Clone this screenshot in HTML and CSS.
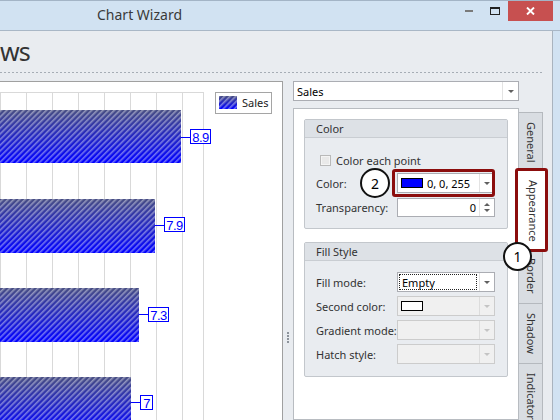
FILE: index.html
```html
<!DOCTYPE html>
<html>
<head>
<meta charset="utf-8">
<title>Chart Wizard</title>
<link rel="stylesheet" href="styles.css">
</head>
<body>
<div class="window">
  <div class="titlebar">
    <span class="title">Chart Wizard</span>
    <span class="spacer"></span>
    <span class="ctl"><svg width="8" height="2" viewBox="0 0 8 2"><rect width="8" height="2" fill="#7a7a7a"/></svg></span>
    <span class="ctl"><svg width="10" height="8" viewBox="0 0 10 8"><rect x="0.5" y="0.5" width="9" height="7" fill="none" stroke="#222"/><rect x="0" y="0" width="10" height="2" fill="#222"/></svg></span>
    <span class="ctl close"><svg width="9" height="8" viewBox="0 0 9 8"><path d="M1 0.5 L8 7.5 M8 0.5 L1 7.5" stroke="#fff" stroke-width="1.9" fill="none"/></svg></span>
  </div>
  <div class="client">
    <div class="header">
      <h1 class="heading">ws</h1>
      <div class="rule"></div>
    </div>
    <div class="main">
      <div class="chart">
        <svg class="plot" width="282" height="338" viewBox="0 0 282 338">
          <defs>
            <linearGradient id="barg" x1="0" y1="0" x2="0" y2="1">
              <stop offset="0" stop-color="#484e84"/>
              <stop offset="1" stop-color="#0000ff"/>
            </linearGradient>
            <pattern id="hatch" width="4" height="4" patternUnits="userSpaceOnUse" patternTransform="rotate(45)">
              <rect width="1.6" height="4" fill="#ffffff" fill-opacity="0.42"/>
            </pattern>
          </defs>
          <g stroke="#d9d9d9" stroke-width="1">
            <line x1="0" y1="10.5" x2="204" y2="10.5"/>
            <line x1="0.5" y1="10" x2="0.5" y2="338"/>
            <line x1="26.5" y1="10" x2="26.5" y2="338"/>
            <line x1="52.5" y1="10" x2="52.5" y2="338"/>
            <line x1="78.5" y1="10" x2="78.5" y2="338"/>
            <line x1="104.5" y1="10" x2="104.5" y2="338"/>
            <line x1="130.5" y1="10" x2="130.5" y2="338"/>
            <line x1="156.5" y1="10" x2="156.5" y2="338"/>
            <line x1="182.5" y1="10" x2="182.5" y2="338"/>
            <line x1="203.5" y1="10" x2="203.5" y2="338"/>
          </g>
          <g>
            <rect x="0" y="28" width="181" height="53" fill="url(#barg)"/>
            <rect x="0" y="28" width="181" height="53" fill="url(#hatch)"/>
            <rect x="0" y="117" width="155" height="54" fill="url(#barg)"/>
            <rect x="0" y="117" width="155" height="54" fill="url(#hatch)"/>
            <rect x="0" y="206" width="139" height="54" fill="url(#barg)"/>
            <rect x="0" y="206" width="139" height="54" fill="url(#hatch)"/>
            <rect x="0" y="295" width="131" height="54" fill="url(#barg)"/>
            <rect x="0" y="295" width="131" height="54" fill="url(#hatch)"/>
          </g>
          <g stroke="#0000ff" stroke-width="1" fill="#ffffff">
            <line x1="181" y1="55.5" x2="190" y2="55.5"/>
            <rect x="190.5" y="47.5" width="20" height="14"/>
            <line x1="155" y1="143.5" x2="164" y2="143.5"/>
            <rect x="164.5" y="135.5" width="20" height="14"/>
            <line x1="139" y1="232.5" x2="148" y2="232.5"/>
            <rect x="148.5" y="225.5" width="20" height="14"/>
            <line x1="131" y1="320.5" x2="140" y2="320.5"/>
            <rect x="140.5" y="313.5" width="12" height="14"/>
          </g>
          <g class="vals" fill="#0000ff" text-anchor="middle">
            <text x="200.5" y="59.5">8.9</text>
            <text x="174.5" y="147.5">7.9</text>
            <text x="158.5" y="237.5">7.3</text>
            <text x="146.5" y="325.5">7</text>
          </g>
          <rect x="215.5" y="10.5" width="56" height="21" fill="#ffffff" stroke="#a5a5a5"/>
          <rect x="219" y="14" width="18" height="13" fill="url(#barg)"/>
          <rect x="219" y="14" width="18" height="13" fill="url(#hatch)"/>
          <text class="legend-text" x="242" y="25">Sales</text>
        </svg>
      </div>
      <div class="splitter"><span class="grip"></span></div>
      <div class="props">
        <div class="combo series">
          <span class="val">Sales</span>
          <span class="btn"><i class="arrow"></i></span>
        </div>
        <div class="tabs">
          <div class="page">
            <section class="group">
              <div class="group-head">Color</div>
              <div class="group-body">
                <div class="row check-row">
                  <span class="check"></span>
                  <span class="check-label">Color each point</span>
                </div>
                <div class="row color-row">
                  <span class="label">Color:</span>
                  <div class="combo marked">
                    <span class="val"><span class="swatch blue"></span><span class="swatch-text">0, 0, 255</span></span>
                    <span class="btn"><i class="arrow"></i></span>
                  </div>
                  <span class="badge badge-2">2</span>
                </div>
                <div class="row spin-row">
                  <span class="label">Transparency:</span>
                  <div class="combo spin">
                    <span class="val num">0</span>
                    <span class="btn spin-btn"><i class="arrow up"></i><i class="arrow small"></i></span>
                  </div>
                </div>
              </div>
            </section>
            <section class="group fill">
              <div class="group-head">Fill Style</div>
              <div class="group-body fill-body">
                <div class="row">
                  <span class="label">Fill mode:</span>
                  <div class="combo">
                    <span class="val"><span class="focus">Empty</span></span>
                    <span class="btn"><i class="arrow"></i></span>
                  </div>
                </div>
                <div class="row">
                  <span class="label">Second color:</span>
                  <div class="combo disabled">
                    <span class="val"><span class="swatch white"></span></span>
                    <span class="btn"><i class="arrow"></i></span>
                  </div>
                </div>
                <div class="row">
                  <span class="label">Gradient mode:</span>
                  <div class="combo disabled">
                    <span class="val"></span>
                    <span class="btn"><i class="arrow"></i></span>
                  </div>
                </div>
                <div class="row">
                  <span class="label">Hatch style:</span>
                  <div class="combo disabled">
                    <span class="val"></span>
                    <span class="btn"><i class="arrow"></i></span>
                  </div>
                </div>
              </div>
            </section>
          </div>
          <div class="strip">
            <div class="tab">General</div>
            <div class="tab active">Appearance</div>
            <div class="tab">Border</div>
            <div class="tab">Shadow</div>
            <div class="tab">Indicators</div>
          </div>
          <span class="badge badge-1">1</span>
        </div>
      </div>
    </div>
  </div>
</div>
</body>
</html>
```
FILE: styles.css
```css
* { box-sizing: border-box; }
html, body { margin: 0; padding: 0; }
body {
  width: 560px;
  height: 420px;
  overflow: hidden;
  background: #d1e2f2;
  font-family: "Noto Sans", "Liberation Sans", sans-serif;
  font-size: 11px;
  color: #333;
}
.window {
  display: flex;
  flex-direction: column;
  height: 420px;
}

/* title bar */
.titlebar {
  flex: none;
  height: 31px;
  display: flex;
  align-items: flex-start;
  border-top: 1px solid #a3b4c6;
  border-bottom: 1px solid #a9b7c6;
  padding-right: 7px;
}
.title {
  margin-left: 97px;
  font-size: 14px;
  line-height: 28px;
  color: #3a3a3a;
}
.spacer { flex: 1; }
.ctl {
  width: 26px;
  height: 20px;
  display: flex;
  align-items: center;
  justify-content: center;
}
.ctl svg { display: block; }
.close {
  width: 45px;
  background: #c75050;
}

/* client area */
.client {
  flex: 1;
  min-height: 0;
  display: flex;
  flex-direction: column;
  background: #e9ecf0;
  margin-right: 7px;
  border-right: 1px solid #a9b3be;
}
.header {
  flex: none;
  margin-right: 10px;
  padding-top: 3px;
  margin-bottom: 8px;
}
.heading {
  margin: 0;
  font-family: "Noto Sans", sans-serif;
  font-weight: normal;
  font-size: 25px;
  line-height: 34px;
  letter-spacing: -1px;
  color: #333;
  height: 38px;
}
.rule {
  height: 1px;
  background: repeating-linear-gradient(to right, #a6adb5 0 2px, transparent 2px 4px);
}
.main {
  flex: 1;
  min-height: 0;
  display: flex;
}

/* chart */
.chart {
  flex: none;
  width: 283px;
  background: #fff;
  border-top: 1px solid #a0a0a0;
  border-right: 1px solid #a0a0a0;
  overflow: hidden;
}
.plot { display: block; }
.vals {
  font-family: "Liberation Sans", sans-serif;
  font-size: 13px;
  letter-spacing: -0.5px;
}
.legend-text {
  font-family: "Noto Sans", sans-serif;
  font-size: 11px;
  fill: #222;
}

/* splitter */
.splitter {
  flex: none;
  width: 10px;
  padding: 251px 0 0 4px;
}
.grip {
  display: block;
  width: 2px;
  height: 11px;
  background: repeating-linear-gradient(to bottom, #8d939b 0 2px, transparent 2px 3px);
}

/* property side */
.props {
  flex: 1;
  min-width: 0;
  display: flex;
  flex-direction: column;
}
.combo {
  position: relative;
  display: flex;
  align-items: stretch;
  width: 98px;
  height: 20px;
  border: 1px solid #abadb3;
  background: #fff;
  color: #000;
}
.combo .val {
  flex: 1;
  min-width: 0;
  display: flex;
  align-items: center;
  padding-left: 3px;
  white-space: nowrap;
}
.combo .btn {
  flex: none;
  width: 15px;
  border-left: 1px solid #e3e3e3;
  display: flex;
  flex-direction: column;
  align-items: center;
  justify-content: center;
}
.arrow {
  display: block;
  width: 0;
  height: 0;
  border-left: 3px solid transparent;
  border-right: 3px solid transparent;
  border-top: 3px solid #606060;
}
.arrow.up {
  border-top: none;
  border-bottom: 3px solid #606060;
  margin-bottom: 3px;
}
.combo.series {
  flex: none;
  width: 226px;
  height: 20px;
  font-size: 11px;
}
.combo.series .btn { width: 16px; }

.tabs {
  flex: 1;
  min-height: 0;
  position: relative;
  display: flex;
  margin-top: 7px;
}
.page {
  flex: none;
  width: 226px;
  background: #fff;
  border: 1px solid #b8bcc1;
  padding: 10px 0 0 10px;
}

/* group boxes */
.group {
  width: 204px;
  border: 1px solid #c3c7cc;
  border-radius: 2px;
  background: #e9ecf0;
}
.group.fill { margin-top: 13px; }
.group-head {
  height: 18px;
  line-height: 17px;
  padding-left: 11px;
  background: #dde1e6;
  border-bottom: 1px solid #c9cdd2;
  color: #333;
}
.group-body {
  padding: 13px 0 11px 11px;
}
.fill-body {
  padding: 11px 0 12px 11px;
}
.row {
  position: relative;
  display: flex;
  align-items: center;
  height: 20px;
  margin-top: 4px;
}
.row:first-child { margin-top: 0; }
.check-row { height: 18px; }
.spin-row { height: 19px; margin-top: 5px; }
.spin-row .combo { height: 19px; }
.label {
  flex: none;
  width: 81px;
  color: #333;
  white-space: nowrap;
}
.check {
  flex: none;
  width: 11px;
  height: 11px;
  margin-left: 4px;
  border: 1px solid #b9b9b9;
  background: #e9e9e9;
  box-shadow: inset 0 0 0 1px #f4f4f4;
}
.check-label {
  margin-left: 5px;
  color: #333;
}
.swatch {
  flex: none;
  width: 22px;
  height: 10px;
  border: 1px solid #000;
}
.swatch.blue { background: #0000ff; }
.swatch.white { background: #fff; }
.swatch-text { margin-left: 4px; }
.num {
  justify-content: flex-end;
  padding-right: 3px;
}
.focus {
  flex: 1;
  align-self: stretch;
  margin: 1px 2px 1px -2px;
  padding-left: 2px;
  border: 1px dotted #222;
  display: flex;
  align-items: center;
}
.combo.disabled {
  border-color: #cccccc;
  background: #f0f0f0;
}
.combo.disabled .btn { border-left-color: #dcdcdc; }
.combo.disabled .arrow { border-top-color: #c4c4c4; }

/* red annotation outlines */
.combo.marked::after {
  content: "";
  position: absolute;
  left: -6px;
  top: -5px;
  right: -1px;
  bottom: -5px;
  border: 3px solid #8b0d0d;
  border-radius: 3px;
}

/* annotation badges */
.badge {
  position: absolute;
  z-index: 3;
  width: 30px;
  height: 30px;
  border: 2px solid #111;
  border-radius: 50%;
  background: #fff;
  color: #000;
  font-size: 14px;
  display: flex;
  align-items: center;
  justify-content: center;
}
.badge-2 { left: 44px; top: -5px; }
.badge-1 { left: 210px; top: 134px; width: 29px; height: 29px; }

/* vertical tabs */
.strip {
  flex: none;
  display: flex;
  flex-direction: column;
  margin-top: 4px;
}
.tab {
  width: 24px;
  writing-mode: vertical-rl;
  line-height: 22px;
  padding: 9px 0;
  margin-top: -1px;
  background: #d9dde2;
  border: 1px solid #b5b9be;
  border-left: none;
  color: #333;
  white-space: nowrap;
}
.tab:first-child { margin-top: 0; }
.tab.active {
  position: relative;
  z-index: 2;
  width: 27px;
  margin-left: -1px;
  margin-top: -2px;
  margin-bottom: 0;
  padding: 9px 0 8px;
  line-height: 24px;
  background: #fff;
  border: none;
}
.tab.active::after {
  content: "";
  position: absolute;
  left: -3px;
  right: -3px;
  top: -3px;
  bottom: -3px;
  border: 3px solid #8b0d0d;
  border-radius: 3px;
}
```
